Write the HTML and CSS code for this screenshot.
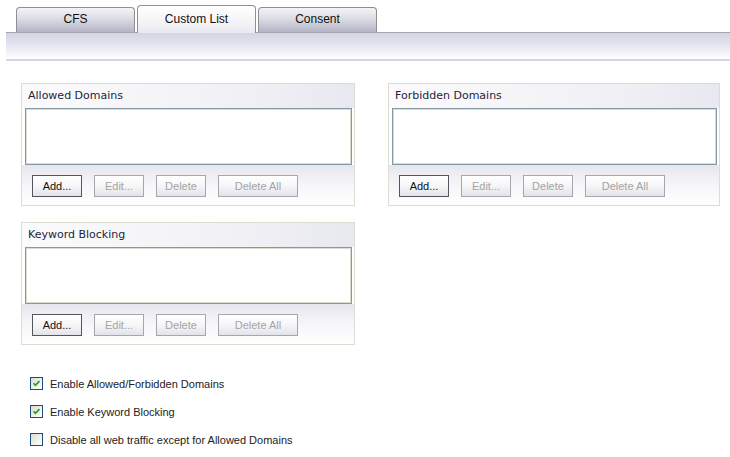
FILE: index.html
```html
<!DOCTYPE html>
<html>
<head>
<meta charset="utf-8">
<link rel="stylesheet" href="styles.css">
</head>
<body>
<div class="tabs">
  <div class="tab">CFS</div>
  <div class="tab active">Custom List</div>
  <div class="tab">Consent</div>
</div>
<div class="band"></div>
<div class="content">
  <div class="row">
    <div class="box">
      <div class="box-head">Allowed Domains</div>
      <div class="listbox"></div>
      <div class="btnrow">
        <button class="btn">Add...</button>
        <button class="btn off">Edit...</button>
        <button class="btn off">Delete</button>
        <button class="btn off wide">Delete All</button>
      </div>
    </div>
    <div class="box">
      <div class="box-head">Forbidden Domains</div>
      <div class="listbox"></div>
      <div class="btnrow">
        <button class="btn">Add...</button>
        <button class="btn off">Edit...</button>
        <button class="btn off">Delete</button>
        <button class="btn off wide">Delete All</button>
      </div>
    </div>
  </div>
  <div class="row">
    <div class="box">
      <div class="box-head">Keyword Blocking</div>
      <div class="listbox"></div>
      <div class="btnrow">
        <button class="btn">Add...</button>
        <button class="btn off">Edit...</button>
        <button class="btn off">Delete</button>
        <button class="btn off wide">Delete All</button>
      </div>
    </div>
  </div>
  <div class="checks">
    <label class="check"><span class="cb on"><svg viewBox="0 0 13 13" width="13" height="13"><path d="M3 6.2 L5.2 8.6 L10 3.6" fill="none" stroke="#21a121" stroke-width="2"/></svg></span>Enable Allowed/Forbidden Domains</label>
    <label class="check"><span class="cb on"><svg viewBox="0 0 13 13" width="13" height="13"><path d="M3 6.2 L5.2 8.6 L10 3.6" fill="none" stroke="#21a121" stroke-width="2"/></svg></span>Enable Keyword Blocking</label>
    <label class="check"><span class="cb"></span>Disable all web traffic except for Allowed Domains</label>
  </div>
</div>
</body>
</html>
```
FILE: styles.css
```css
html, body {
  margin: 0;
  padding: 0;
  background: #ffffff;
}
body {
  font-family: "DejaVu Sans", Verdana, sans-serif;
  font-size: 11px;
  color: #222;
}
.tabs {
  display: flex;
  align-items: flex-end;
  gap: 2px;
  padding-left: 16px;
  height: 32px;
}
.tab {
  box-sizing: border-box;
  width: 119px;
  height: 25px;
  border: 1px solid #8e8e96;
  border-bottom: none;
  border-radius: 4px 4px 0 0;
  background: linear-gradient(to bottom, #f4f4f6 0%, #dcdce4 45%, #b4b4c6 100%);
  font-family: "Liberation Sans", Arial, sans-serif;
  font-size: 12px;
  color: #111;
  text-align: center;
  line-height: 22px;
}
.tab.active {
  height: 28px;
  margin-bottom: -1px;
  background: linear-gradient(to bottom, #ffffff 0%, #f4f4f8 60%, #e8e8f0 100%);
  line-height: 26px;
  position: relative;
  z-index: 1;
}
.band {
  margin-left: 6px;
  height: 26px;
  border-top: 1px solid #a4a4ae;
  border-bottom: 2px solid #d6d6e2;
  background: linear-gradient(to bottom, #d2d3e5 0%, #e4e5ef 45%, #ffffff 100%);
}
.content {
  padding: 22px 0 0 21px;
}
.row {
  display: flex;
  gap: 33px;
  margin-bottom: 16px;
}
.box {
  box-sizing: border-box;
  width: 334px;
  height: 123px;
  border: 1px solid #dcdcd0;
  display: flex;
  flex-direction: column;
}
.row .box + .box {
  width: 332px;
}
.box-head {
  height: 24px;
  line-height: 24px;
  padding-left: 6px;
  color: #1e1e3a;
  background: linear-gradient(to right, #fbfbfd 0%, #f2f2f6 60%, #e8e8f0 100%);
}
.listbox {
  box-sizing: border-box;
  height: 57px;
  margin: 0 2px 0 3px;
  border: 1px solid #8598a4;
  box-shadow: inset 0 0 0 1px #dcdcd0;
  background: #fff;
}
.btnrow {
  flex: 1;
  display: flex;
  align-items: flex-start;
  gap: 12px;
  padding: 10px 0 0 10px;
  background: linear-gradient(to bottom, #e6e6ee 0%, #f6f6f9 50%, #ffffff 100%);
}
.btn {
  box-sizing: border-box;
  width: 50px;
  height: 22px;
  padding: 0;
  border: 1px solid #55555f;
  border-radius: 0;
  background: linear-gradient(to bottom, #ffffff 0%, #f6f6f8 50%, #e2e2ea 100%);
  font-family: "Liberation Sans", Arial, sans-serif;
  font-size: 11px;
  color: #111;
}
.btn.off {
  border-color: #a6a6ae;
  color: #a4a4a4;
}
.btn.wide {
  width: 80px;
}
.checks {
  display: flex;
  flex-direction: column;
  gap: 15px;
  padding: 16px 0 0 9px;
}
.check {
  display: flex;
  align-items: center;
  gap: 7px;
  height: 13px;
  font-family: "Liberation Sans", Arial, sans-serif;
  font-size: 11px;
  color: #222;
}
.cb {
  box-sizing: border-box;
  width: 13px;
  height: 13px;
  border: 1px solid #1c4c78;
  background: linear-gradient(135deg, #dcdcd4 0%, #f2f2ee 60%, #ffffff 100%);
  display: flex;
  align-items: center;
  justify-content: center;
}
.cb svg {
  display: block;
  width: 11px;
  height: 11px;
}
```
